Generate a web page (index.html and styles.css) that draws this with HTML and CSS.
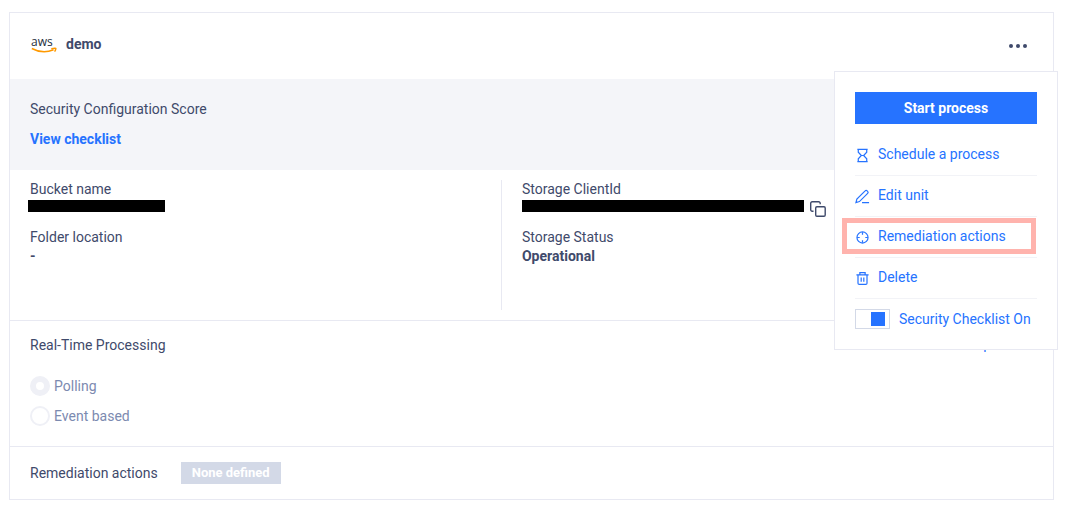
FILE: index.html
```html
<!DOCTYPE html>
<html lang="en">
<head>
  <meta charset="UTF-8" />
  <title>Storage unit</title>
  <link rel="stylesheet" href="styles.css">
</head>
<body>
  <div class="card">
    <div class="card-header">
      <svg class="aws-logo" viewBox="0 0 26 22" width="26" height="22" aria-label="aws">
        <text x="0" y="13">aws</text>
        <path class="smile" d="M0.8 15.500Q12 21.500 22.500 16.800" />
        <path class="smile" d="M20.300 15.700Q25.300 14.500 24.800 15.900Q24.600 17.300 23.600 18.600" />
      </svg>
      <span class="unit-name">demo</span>
      <button class="more-btn" aria-label="More">
        <svg viewBox="0 0 18 4" width="18" height="4"><circle cx="2" cy="2" r="2" /><circle cx="9" cy="2" r="2" /><circle cx="16" cy="2" r="2" /></svg>
      </button>
    </div>

    <div class="score">
      <div>Security Configuration Score</div>
      <a class="checklist-link" href="#">View checklist</a>
    </div>

    <div class="details">
      <div class="details-col">
        <div class="field">
          <div>Bucket name</div>
          <div class="value"><span class="redacted redacted-name"></span></div>
        </div>
        <div class="field">
          <div>Folder location</div>
          <div class="value">-</div>
        </div>
      </div>
      <div class="details-col">
        <div class="field">
          <div>Storage ClientId</div>
          <div class="value">
            <span class="redacted redacted-id"></span>
            <button class="copy-btn" aria-label="Copy">
              <svg viewBox="0 0 16 16" width="16" height="16"><path d="M3.500 10.200H2.200A1.500 1.500 0 0 1 .7 8.700V2.200A1.500 1.500 0 0 1 2.200.7H8.700A1.500 1.500 0 0 1 10.200 2.200V3.300" /><rect x="5.700" y="5.700" width="9.500" height="9.500" rx="1.200" /></svg>
            </button>
          </div>
        </div>
        <div class="field">
          <div>Storage Status</div>
          <div class="value">Operational</div>
        </div>
      </div>
    </div>

    <div class="realtime">
      <div class="realtime-title">
        <span>Real-Time Processing</span>
        <a href="#">Start process</a>
      </div>
      <label class="option"><input type="radio" name="mode" checked disabled>Polling</label>
      <label class="option"><input type="radio" name="mode" disabled>Event based</label>
    </div>

    <div class="remediation">
      <span>Remediation actions</span>
      <span class="tag">None defined</span>
    </div>
  </div>

  <!-- actions menu -->
  <div class="menu">
    <button class="start-btn">Start process</button>
    <button class="menu-item">
      <svg viewBox="0 0 16 16"><path d="M2.500 1.500H13.500M2.500 14.500H13.500M3.500 1.500V4.500L6.800 8L3.500 11.500V14.500M12.500 1.500V4.500L9.200 8L12.500 11.500V14.500M6.800 8H9.200" /></svg>
      Schedule a process
    </button>
    <button class="menu-item">
      <svg viewBox="0 0 16 16"><path d="M1 14.500L2 10.800L10.800 2A1.500 1.500 0 0 1 13 2L13.500 2.500A1.500 1.500 0 0 1 13.500 4.600L4.700 13.400ZM7.500 14.500H15" /></svg>
      Edit unit
    </button>
    <button class="menu-item highlighted">
      <svg viewBox="0 0 16 16"><circle cx="8" cy="8" r="5.900" /><path d="M8 2.300V5M8 11V13.700M2.300 8H5M11 8H13.700" /></svg>
      Remediation actions
    </button>
    <button class="menu-item">
      <svg viewBox="0 0 16 16"><path d="M1.500 4.200H14.500M5.200 4V1.800H10.800V4M3.200 4.500V13A1.300 1.300 0 0 0 4.500 14.300H11.500A1.300 1.300 0 0 0 12.800 13V4.500M6.600 7V11.500M9.400 7V11.500" /></svg>
      Delete
    </button>
    <label class="menu-item menu-toggle"><input type="checkbox" checked>Security Checklist On</label>
  </div>
</body>
</html>
```

FILE: styles.css
```css
* {
  box-sizing: border-box;
}
body {
  position: relative;
  margin: 0;
  padding: 12px 25px 11px 9px;
  font-family: Roboto, sans-serif;
  font-size: 14px;
  line-height: 19px;
  color: #3f4a6b;
  background: #fff;
}
button {
  padding: 0;
  border: none;
  background: none;
  font: inherit;
  color: inherit;
  cursor: pointer;
}
a {
  color: #2673ff;
  text-decoration: none;
}
svg {
  display: block;
  flex: none;
}
.card {
  border: 1px solid #e8e9f2;
}
.card-header {
  display: flex;
  align-items: center;
  height: 66px;
  padding: 0 26px 4px 21px;
}
.aws-logo {
  overflow: visible;
}
.aws-logo text {
  font-family: "Open Sans", sans-serif;
  font-size: 12px;
  fill: #252f3e;
}
.aws-logo .smile {
  fill: none;
  stroke: #f90;
  stroke-width: 1.5;
}
.unit-name {
  margin-left: 9px;
  font-weight: bold;
}
.more-btn {
  margin-left: auto;
  padding-top: 4px;
  fill: #3f4a6b;
}
.score {
  padding: 21px 20px 20px;
  background: #f4f5f9;
}
.checklist-link {
  display: block;
  margin-top: 10px;
  line-height: 21px;
  font-weight: bold;
}
.details {
  display: grid;
  grid-template-columns: 25fr 28fr;
  padding: 10px 0;
  border-bottom: 1px solid #e8e9f2;
}
.details-col {
  height: 130px;
  padding: 0 20px;
}
.details-col:first-child {
  border-right: 1px solid #e8e9f2;
}
.field {
  margin-bottom: 10px;
}
.value {
  display: flex;
  height: 19px;
  font-weight: bold;
}
.redacted {
  height: 12px;
  margin-top: 1px;
  background: #000;
}
.redacted-name {
  width: 137px;
  margin-left: -2px;
}
.redacted-id {
  width: 282px;
}
.copy-btn {
  margin-left: 6px;
}
.copy-btn svg {
  fill: none;
  stroke: #3f4a6b;
  stroke-width: 1.4;
}
.realtime {
  padding: 15px 20px;
  border-bottom: 1px solid #e8e9f2;
}
.realtime-title {
  display: flex;
  justify-content: space-between;
  margin-bottom: 16px;
}
.realtime-title a {
  line-height: 17px;
}
.option {
  display: flex;
  align-items: center;
  gap: 4px;
  height: 30px;
  color: #7c8ab0;
}
.option input {
  appearance: none;
  width: 20px;
  height: 20px;
  margin: 0;
  border: 2px solid #eff0f6;
  border-radius: 50%;
  background: #fff;
}
.option input:checked {
  border-width: 6px;
}
.remediation {
  display: flex;
  align-items: center;
  gap: 23px;
  height: 52px;
  padding-left: 20px;
}
.tag {
  padding: 0 11px;
  line-height: 22px;
  background: #d3d9e7;
  color: #fff;
  font-weight: bold;
  font-size: 13px;
}
.menu {
  position: absolute;
  top: 71px;
  right: 21px;
  width: 224px;
  padding: 20px 20px 10px;
  border: 1px solid #e8e9f2;
  background: #fff;
}
.start-btn {
  display: block;
  width: 100%;
  height: 32px;
  margin-bottom: 11px;
  background: #2673ff;
  color: #fff;
  font-weight: bold;
}
.menu-item {
  position: relative;
  display: flex;
  align-items: center;
  gap: 8px;
  width: 100%;
  height: 41px;
  padding-bottom: 2px;
  border-bottom: 1px solid #f2f3f7;
  color: #2673ff;
  white-space: nowrap;
}
.menu-item svg {
  width: 15px;
  height: 15px;
  margin-top: 3px;
  fill: none;
  stroke: #2673ff;
  stroke-width: 1.3;
}
.highlighted::after {
  content: "";
  position: absolute;
  inset: 1px 1px 3px -13px;
  border: 5px solid #ffb3ad;
}
.menu-toggle {
  gap: 9px;
  height: 40px;
  padding-bottom: 0;
  border-bottom: none;
}
.menu-toggle input {
  appearance: none;
  flex: none;
  width: 35px;
  height: 20px;
  margin: 0;
  padding: 2px 4px 2px 15px;
  border: 1px solid #d3d9e7;
  background: #2673ff content-box;
}
```
